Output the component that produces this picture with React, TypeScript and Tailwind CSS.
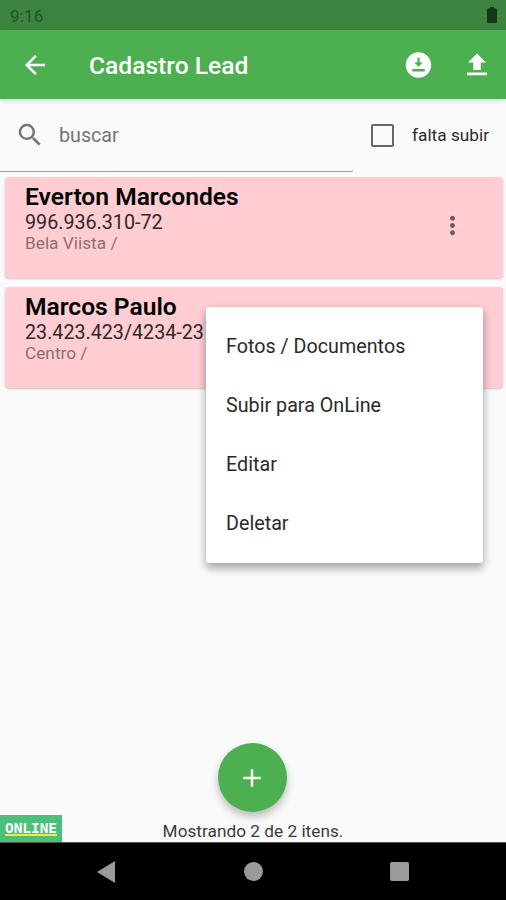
import { useState } from 'react';
import { MdAdd, MdArrowBack, MdMoreVert, MdSearch } from 'react-icons/md';

interface Lead {
  name: string;
  document: string;
  address: string;
}

const leads: Lead[] = [
  { name: 'Everton Marcondes', document: '996.936.310-72', address: 'Bela Viista /' },
  { name: 'Marcos Paulo', document: '23.423.423/4234-23', address: 'Centro /' },
];

const menuItems = ['Fotos / Documentos', 'Subir para OnLine', 'Editar', 'Deletar'];

const StatusBar = () => (
  <div className="flex h-[30px] items-center justify-between bg-[#3d843f] pr-[9px] pl-[10px]">
    <span className="pt-[2px] text-[17px] leading-[28px] tracking-[0.2px] text-[#1d5420]">9:16</span>
    <svg width="10" height="16" viewBox="0 0 10 16" fill="#143716">
      <path d="M3 0h4v1.5h2a1 1 0 0 1 1 1V15a1 1 0 0 1-1 1H1a1 1 0 0 1-1-1V2.5a1 1 0 0 1 1-1h2z" />
    </svg>
  </div>
);

const Header = () => (
  <header className="relative z-10 flex h-[69px] items-center bg-[#4caf50] pr-[14px] pl-5 text-white shadow-[0_2px_5px_rgba(0,0,0,0.14)]">
    <button aria-label="Voltar">
      <MdArrowBack size={30} />
    </button>
    <h1 className="ml-[39px] flex-1 pt-[3px] text-[24.6px] font-medium">Cadastro Lead</h1>
    <button aria-label="Baixar">
      <svg width="31" height="30" viewBox="0 0 24 24" fill="currentColor">
        <path d="M12 1.8C6.4 1.8 1.800 6.400 1.800 12s4.600 10.200 10.200 10.200 10.200-4.600 10.200-10.200S17.600 1.800 12 1.800zm-.9 8.200V6.200h1.800V10h2.500L12 13.400 8.600 10zM17 17.200H7v-2h10z" />
      </svg>
    </button>
    <button aria-label="Enviar" className="ml-[28px]">
      <svg width="30" height="30" viewBox="0 0 24 24" fill="currentColor">
        <path d="M9 16h6v-6h4.200L12 2.800 4.800 10H9zm-5 2h16v2.200H4z" />
      </svg>
    </button>
  </header>
);

const SearchBar = () => {
  const [onlyPending, setOnlyPending] = useState(false);

  return (
    <div className="flex h-[74px]">
      <label className="flex h-[73px] w-[353px] items-center border-b border-[#a0a0a0] pl-[15px]">
        <MdSearch size={30} className="text-[#757575]" />
        <input
          placeholder="buscar"
          className="ml-[14px] w-60 bg-transparent pt-[2px] text-[19.7px] outline-none placeholder:text-[#757575]"
        />
      </label>
      <div className="flex h-[73px] items-center pl-[18px]">
        <button
          role="checkbox"
          aria-checked={onlyPending}
          aria-label="falta subir"
          onClick={() => setOnlyPending(!onlyPending)}
          className={`size-[23px] rounded-[2px] border-2 border-[#666] ${onlyPending ? 'bg-[#4caf50]' : ''}`}
        />
        <span className="ml-[18px] pt-px text-[17.2px] tracking-[0.03px] whitespace-nowrap text-[#2a2a2a]">
          falta subir
        </span>
      </div>
    </div>
  );
};

const LeadCard = ({ lead }: { lead: Lead }) => (
  <li className="flex h-[101px] justify-between rounded-[4px] bg-[#ffcdd2] pr-9 pl-5 shadow-[0_1px_2px_rgba(0,0,0,0.22)]">
    <div className="pt-[6px]">
      <h2 className="pt-px text-[24.6px] leading-[26px] font-semibold text-black">{lead.name}</h2>
      <p className="pt-px text-[19.7px] leading-[23px] text-[#332629]">{lead.document}</p>
      <p className="text-[17.2px] leading-[19px] tracking-[0.03px] text-[#8b6f72]">{lead.address}</p>
    </div>
    <button aria-label="Mais opções" className="h-[97px] text-[#74595c]">
      <MdMoreVert size={29} />
    </button>
  </li>
);

const PopupMenu = () => (
  <ul className="absolute top-[307px] left-[206px] z-20 h-[256px] w-[277px] rounded-[3px] bg-white py-[10px] shadow-[0_6px_8px_rgba(0,0,0,0.25),0_2px_10px_rgba(0,0,0,0.14)]">
    {menuItems.map((item) => (
      <li key={item} className="flex h-[59px] items-center pl-5 text-[19.7px] tracking-[0.02px] text-[#2a2a2a]">
        {item}
      </li>
    ))}
  </ul>
);

const NavigationBar = () => (
  <nav className="flex h-[58px] items-center border-t border-[#555] bg-black pl-[97px] text-[#9a9a9a]">
    <svg width="18" height="22" viewBox="0 0 18 22" fill="currentColor">
      <path d="M18 0v22L0 11z" />
    </svg>
    <span className="ml-[129px] size-[19px] rounded-full bg-current" />
    <span className="ml-[127px] size-[19px] rounded-[2px] bg-current" />
  </nav>
);

const App = () => {
  return (
    <div className="relative flex h-[900px] w-[506px] flex-col overflow-hidden bg-[#fafafa] font-['Roboto',sans-serif]">
      <StatusBar />
      <Header />
      <SearchBar />
      <ul className="flex flex-1 flex-col gap-[9px] pt-1 pr-[3px] pl-[5px]">
        {leads.map((lead) => (
          <LeadCard key={lead.name} lead={lead} />
        ))}
      </ul>
      <PopupMenu />

      <footer className="grid h-[99px] grid-cols-[1fr_auto_1fr]">
        <span className="h-[27px] w-[62px] self-end bg-[#4cc07a] pl-[5px] font-['DejaVu_Sans_Mono',monospace] text-[14.4px] leading-[27px] font-bold text-white underline decoration-[#e6ee4c] decoration-[1.5px] underline-offset-[1px]">
          ONLINE
        </span>
        <div className="flex flex-col items-center">
          <button
            aria-label="Adicionar"
            className="mr-[2px] flex size-[69px] items-center justify-center rounded-full bg-[#4caf50] text-white shadow-[0_5px_8px_rgba(0,0,0,0.25)]"
          >
            <MdAdd size={30} />
          </button>
          <p className="mt-[8px] text-[17.2px] leading-[22px] tracking-[0.03px] text-[#3a3a3a]">Mostrando 2 de 2 itens.</p>
        </div>
      </footer>
      <NavigationBar />
    </div>
  );
};

export default App;
